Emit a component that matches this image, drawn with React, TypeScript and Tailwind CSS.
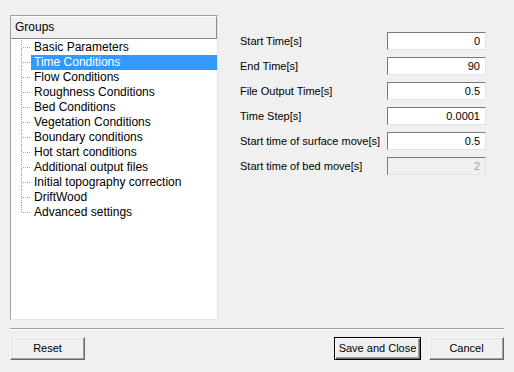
import React from "react";

const groups = [
  "Basic Parameters",
  "Time Conditions",
  "Flow Conditions",
  "Roughness Conditions",
  "Bed Conditions",
  "Vegetation Conditions",
  "Boundary conditions",
  "Hot start conditions",
  "Additional output files",
  "Initial topography correction",
  "DriftWood",
  "Advanced settings",
];

const fields = [
  { label: "Start Time[s]", value: "0" },
  { label: "End Time[s]", value: "90" },
  { label: "File Output Time[s]", value: "0.5" },
  { label: "Time Step[s]", value: "0.0001" },
  { label: "Start time of surface move[s]", value: "0.5" },
  { label: "Start time of bed move[s]", value: "2", disabled: true },
];

const TreeLines = ({ last }: { last: boolean }) => (
  <svg width="10" height="15" className="shrink-0" shapeRendering="crispEdges">
    <line
      x1="0.5"
      y1="0"
      x2="0.5"
      y2={last ? 8 : 15}
      stroke="#a0a0a0"
      strokeDasharray="1 1"
    />
    <line x1="2" y1="7.5" x2="10" y2="7.5" stroke="#a0a0a0" strokeDasharray="1 1" />
  </svg>
);

const Button = ({
  children,
  width,
  isDefault,
}: {
  children: React.ReactNode;
  width: string;
  isDefault?: boolean;
}) => (
  <button
    className={`${width} h-[23px] text-[11px] text-black bg-[#f0f0f0] ${
      isDefault
        ? "border border-black shadow-[inset_1px_1px_0_#ffffff,inset_-1px_-1px_0_#696969,inset_-2px_-2px_0_#a0a0a0]"
        : "border border-t-white border-l-white border-r-[#696969] border-b-[#696969] shadow-[inset_-1px_-1px_0_#a0a0a0,inset_1px_1px_0_#e3e3e3]"
    }`}
  >
    {children}
  </button>
);

export default function App() {
  return (
    <div className="w-[514px] h-[372px] bg-[#f0f0f0] pt-[15px] px-[10px] flex flex-col font-['Liberation_Sans',Arial,sans-serif] text-black overflow-hidden">
      <div className="flex h-[305px]">
        {/* groups tree */}
        <div className="w-[208px] h-full bg-white border border-t-[#a0a0a0] border-l-[#a0a0a0] border-r-[#e3e3e3] border-b-[#e3e3e3] flex flex-col">
          <div className="h-[23px] bg-[#f0f0f0] border-b border-r border-[#8a8a8a] border-t border-t-white pl-[4px] text-[12px] leading-[20px] shrink-0">
            Groups
          </div>
          <ul className="mt-[1px] flex flex-col">
            {groups.map((g, idx) => (
              <li key={g} className="flex h-[15px] text-[12px] leading-[15px]">
                <div className="w-[10px] shrink-0" />
                <TreeLines last={idx === groups.length - 1} />
                <div
                  className={`flex-1 pl-[3px] whitespace-nowrap ${
                    idx === 1 ? "bg-[#3399ff] text-white" : ""
                  }`}
                >
                  {g}
                </div>
              </li>
            ))}
          </ul>
        </div>

        {/* time fields */}
        <div className="ml-[22px] pt-[17px] flex flex-col gap-[7px]">
          {fields.map((f) => (
            <div key={f.label} className="flex items-center h-[18px] text-[11px]">
              <div className="w-[147px] whitespace-nowrap">{f.label}</div>
              <div
                className={`w-[99px] h-[18px] border border-t-[#7a7a7a] border-l-[#7a7a7a] border-r-[#e3e3e3] border-b-[#e3e3e3] text-right pr-[5px] leading-[16px] ${
                  f.disabled ? "bg-[#f0f0f0] text-[#a0a0a0]" : "bg-white"
                }`}
              >
                {f.value}
              </div>
            </div>
          ))}
        </div>
      </div>

      <div className="mt-[8px] h-[2px] border-t border-[#a0a0a0] border-b border-b-white" />

      <div className="mt-[7px] flex">
        <Button width="w-[75px]">Reset</Button>
        <div className="flex-1" />
        <Button width="w-[87px]" isDefault>
          Save and Close
        </Button>
        <div className="w-[8px]" />
        <Button width="w-[75px]">Cancel</Button>
      </div>
    </div>
  );
}
